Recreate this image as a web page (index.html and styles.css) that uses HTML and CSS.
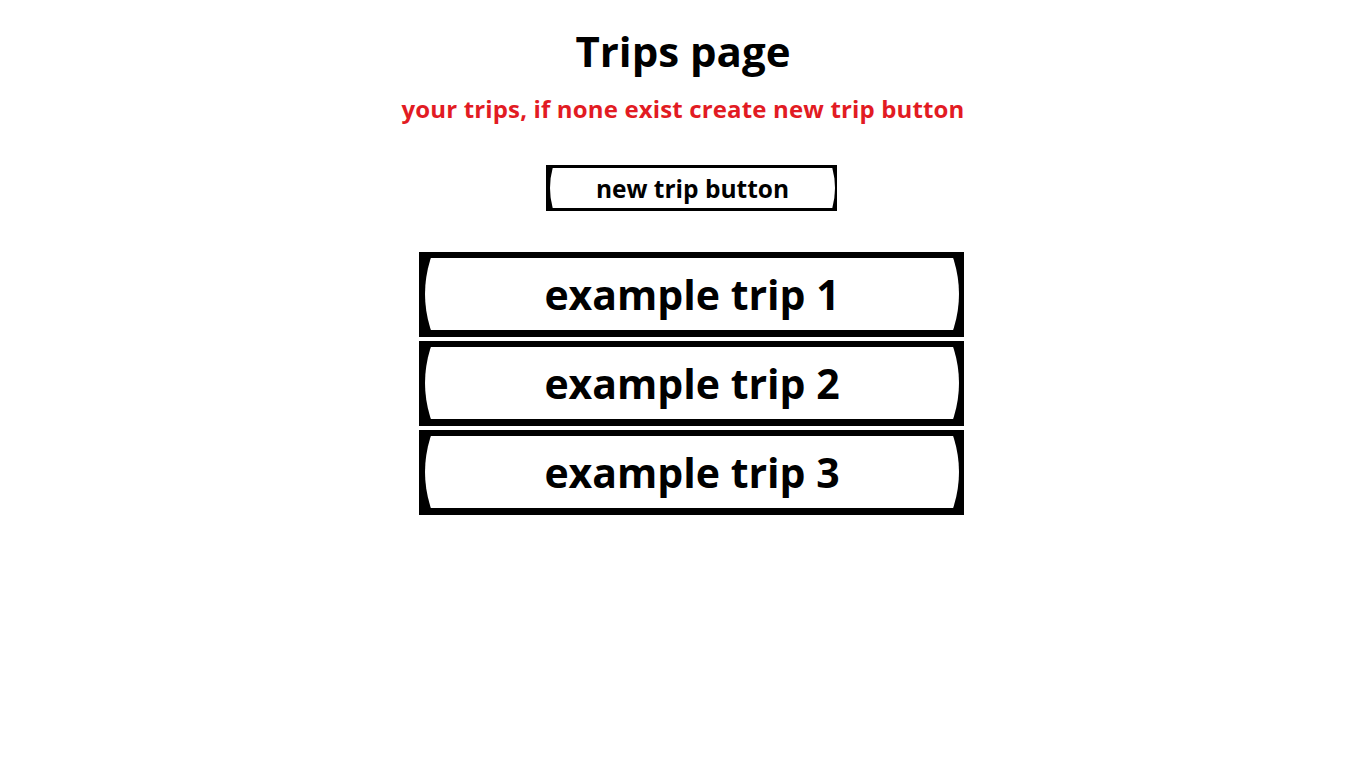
FILE: index.html
```html
<!DOCTYPE html>
<html lang="en">
<head>
    <meta charset="UTF-8">
    <meta name="viewport" content="width=device-width, initial-scale=1.0">
    <title>Trips page</title>
    <link rel="stylesheet" href="styles.css">
</head>
<body>
    <div class="page">
        <h1>Trips page</h1>
        <p class="note">your trips, if none exist create new trip button</p>

        <div class="frame new-trip">
            <div class="frame-inner">new trip button</div>
        </div>

        <div class="trip-list">
            <div class="frame trip">
                <div class="frame-inner">example trip 1</div>
            </div>
            <div class="frame trip">
                <div class="frame-inner">example trip 2</div>
            </div>
            <div class="frame trip">
                <div class="frame-inner">example trip 3</div>
            </div>
        </div>
    </div>
</body>
</html>
```

FILE: styles.css
```css
body {
    margin: 0;
    padding: 0;
    background: #ffffff;
    font-family: "Open Sans", "Noto Sans", Arial, sans-serif;
    color: #000000;
}
.page {
    display: flex;
    flex-direction: column;
    align-items: center;
    padding-top: 23px;
}
h1 {
    margin: 0;
    font-size: 42px;
    font-weight: 700;
    line-height: 56px;
}
.note {
    margin: 15px 0 0;
    color: #e21b23;
    font-size: 24px;
    font-weight: 700;
    line-height: 30px;
    letter-spacing: 0.15px;
}
.frame {
    background: #000000;
    box-sizing: border-box;
    display: flex;
}
/* white face with bulging sides, clipped by a tall ellipse */
.frame-inner {
    flex: 1;
    background: #ffffff;
    display: flex;
    align-items: center;
    justify-content: center;
    font-weight: 700;
    clip-path: ellipse(50% 240% at 50% 50%);
}
.new-trip {
    width: 291px;
    height: 46px;
    padding: 3px 2px 3px 4px;
    margin: 41px 0 0 17px;
}
.new-trip .frame-inner {
    font-size: 24.5px;
    clip-path: ellipse(50% 260% at 50% 50%);
}
.trip-list {
    display: flex;
    flex-direction: column;
    gap: 4px;
    margin: 41px 0 0 17px;
}
.trip {
    width: 545px;
    height: 85px;
    padding: 6px 5px 7px 6px;
}
.trip .frame-inner {
    font-size: 41px;
}
```
